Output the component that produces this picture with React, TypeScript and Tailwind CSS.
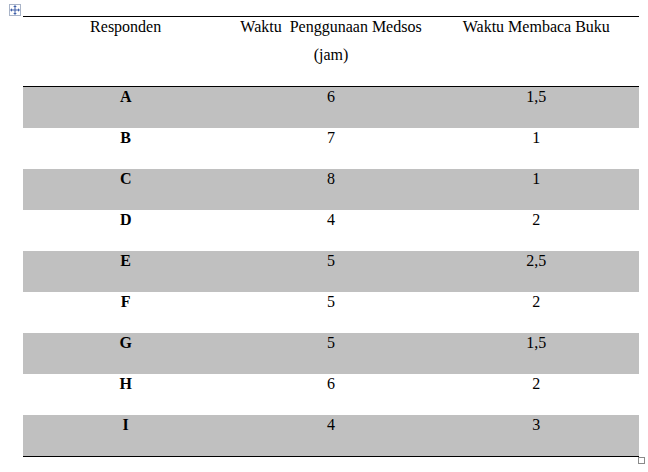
// Word-style table: social media use vs. book reading time per respondent

import React from 'react'

interface Row {
  name: string
  medsos: string
  buku: string
}

const rows: Row[] = [
  { name: 'A', medsos: '6', buku: '1,5' },
  { name: 'B', medsos: '7', buku: '1' },
  { name: 'C', medsos: '8', buku: '1' },
  { name: 'D', medsos: '4', buku: '2' },
  { name: 'E', medsos: '5', buku: '2,5' },
  { name: 'F', medsos: '5', buku: '2' },
  { name: 'G', medsos: '5', buku: '1,5' },
  { name: 'H', medsos: '6', buku: '2' },
  { name: 'I', medsos: '4', buku: '3' },
]

const MoveHandle: React.FC = () => (
  <div className="absolute left-[9px] top-[4px] w-[12px] h-[12px] border border-[#a9b4c8] bg-white flex items-center justify-center">
    <svg width="10" height="10" viewBox="0 0 10 10" fill="#3f5fa8">
      <rect x="4.5" y="1.5" width="1" height="7" />
      <rect x="1.5" y="4.5" width="7" height="1" />
      <polygon points="5,0 3.2,2 6.8,2" />
      <polygon points="5,10 3.2,8 6.8,8" />
      <polygon points="0,5 2,3.2 2,6.8" />
      <polygon points="10,5 8,3.2 8,6.8" />
    </svg>
  </div>
)

const App: React.FC = () => {
  return (
    <div className="relative w-[648px] h-[472px] bg-white pl-[23px] pt-[16px] text-[16px] text-black font-[family-name:'Liberation_Serif','Times_New_Roman',serif]">
      <MoveHandle />

      <div className="w-[616px] border-t border-b border-black">
        {/* Header */}
        <div className="grid grid-cols-3 h-[70px] border-b border-black text-center">
          <div className="leading-[20px]">Responden</div>
          <div>
            <div className="leading-[20px] whitespace-pre">Waktu  Penggunaan Medsos</div>
            <div className="leading-[20px] mt-2">(jam)</div>
          </div>
          <div className="leading-[20px]">Waktu Membaca Buku</div>
        </div>

        {/* Rows */}
        {rows.map((row, i) => (
          <div
            key={row.name}
            className={`grid grid-cols-3 h-[41px] text-center leading-[20px] ${
              i % 2 === 0 ? 'bg-[#c0c0c0]' : 'bg-white'
            }`}
          >
            <div className="font-bold">{row.name}</div>
            <div>{row.medsos}</div>
            <div>{row.buku}</div>
          </div>
        ))}
      </div>

      {/* resize handle */}
      <div className="absolute left-[638px] top-[457px] w-[7px] h-[7px] border border-[#8a8a8a] bg-white" />
    </div>
  )
}

export default App
